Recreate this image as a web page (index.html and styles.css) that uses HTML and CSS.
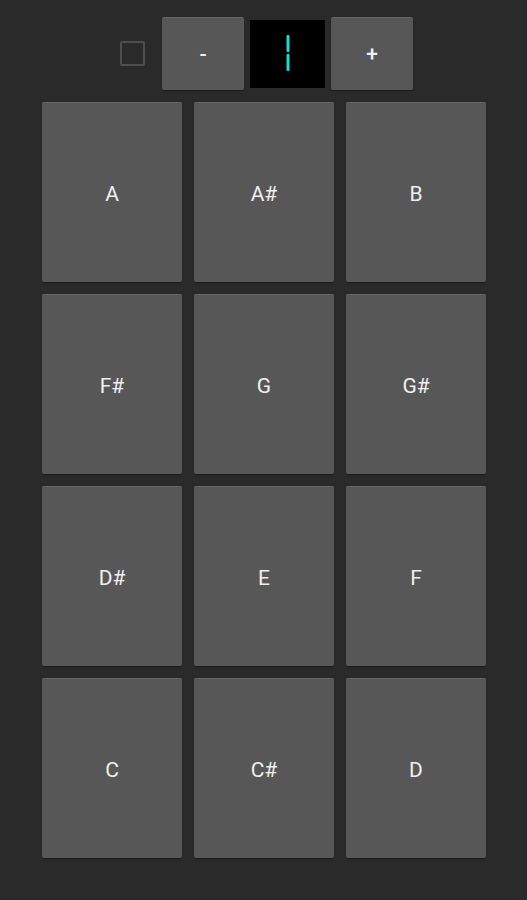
FILE: index.html
```html
<!DOCTYPE html>
<html>
<head>
<meta charset="utf-8">
<link rel="stylesheet" href="styles.css">
</head>
<body>
<div class="app">
  <div class="toolbar">
    <div class="check"></div>
    <button class="btn small">-</button>
    <div class="display">
      <svg width="6" height="38" viewBox="0 0 6 38">
        <rect x="1.5" y="0" width="3" height="17" rx="1.2" fill="#1fd8cc"/>
        <rect x="1.5" y="19" width="3" height="17" rx="1.2" fill="#1fd8cc"/>
      </svg>
    </div>
    <button class="btn small">+</button>
  </div>
  <div class="grid">
    <button class="btn pad">A</button>
    <button class="btn pad">A#</button>
    <button class="btn pad">B</button>
    <button class="btn pad">F#</button>
    <button class="btn pad">G</button>
    <button class="btn pad">G#</button>
    <button class="btn pad">D#</button>
    <button class="btn pad">E</button>
    <button class="btn pad">F</button>
    <button class="btn pad">C</button>
    <button class="btn pad">C#</button>
    <button class="btn pad">D</button>
  </div>
</div>
</body>
</html>
```
FILE: styles.css
```css
html, body {
  margin: 0;
  padding: 0;
  background: #2a2a2a;
  height: 100%;
}
.app {
  width: 527px;
  height: 900px;
  background: #2a2a2a;
  font-family: Roboto, "Liberation Sans", sans-serif;
  box-sizing: border-box;
  padding-top: 17px;
}
.toolbar {
  display: flex;
  align-items: center;
  height: 73px;
  padding-left: 120px;
}
.check {
  width: 25px;
  height: 25px;
  box-sizing: border-box;
  border: 2px solid #4e4e4e;
  border-radius: 2px;
  margin-right: 17px;
}
.btn {
  background: #575757;
  color: #f0f0f0;
  border: none;
  border-top: 1px solid #666;
  border-radius: 2px;
  box-shadow: 0 1px 1px rgba(0,0,0,0.35);
  font-family: Roboto, "Liberation Sans", sans-serif;
  padding: 0;
  margin: 0;
  box-sizing: border-box;
  display: flex;
  align-items: center;
  justify-content: center;
}
.small {
  width: 82px;
  height: 73px;
  font-size: 21px;
  font-weight: 500;
}
.display {
  width: 75px;
  height: 68px;
  background: #000;
  margin: 0 6px;
  display: flex;
  align-items: center;
  justify-content: center;
}
.display svg {
  margin-left: 0;
  margin-top: 1px;
}
.grid {
  display: grid;
  grid-template-columns: repeat(3, 140px);
  grid-auto-rows: 180px;
  gap: 12px;
  padding-left: 42px;
  margin-top: 12px;
}
.pad {
  font-size: 21px;
  padding-top: 2px;
}
```
